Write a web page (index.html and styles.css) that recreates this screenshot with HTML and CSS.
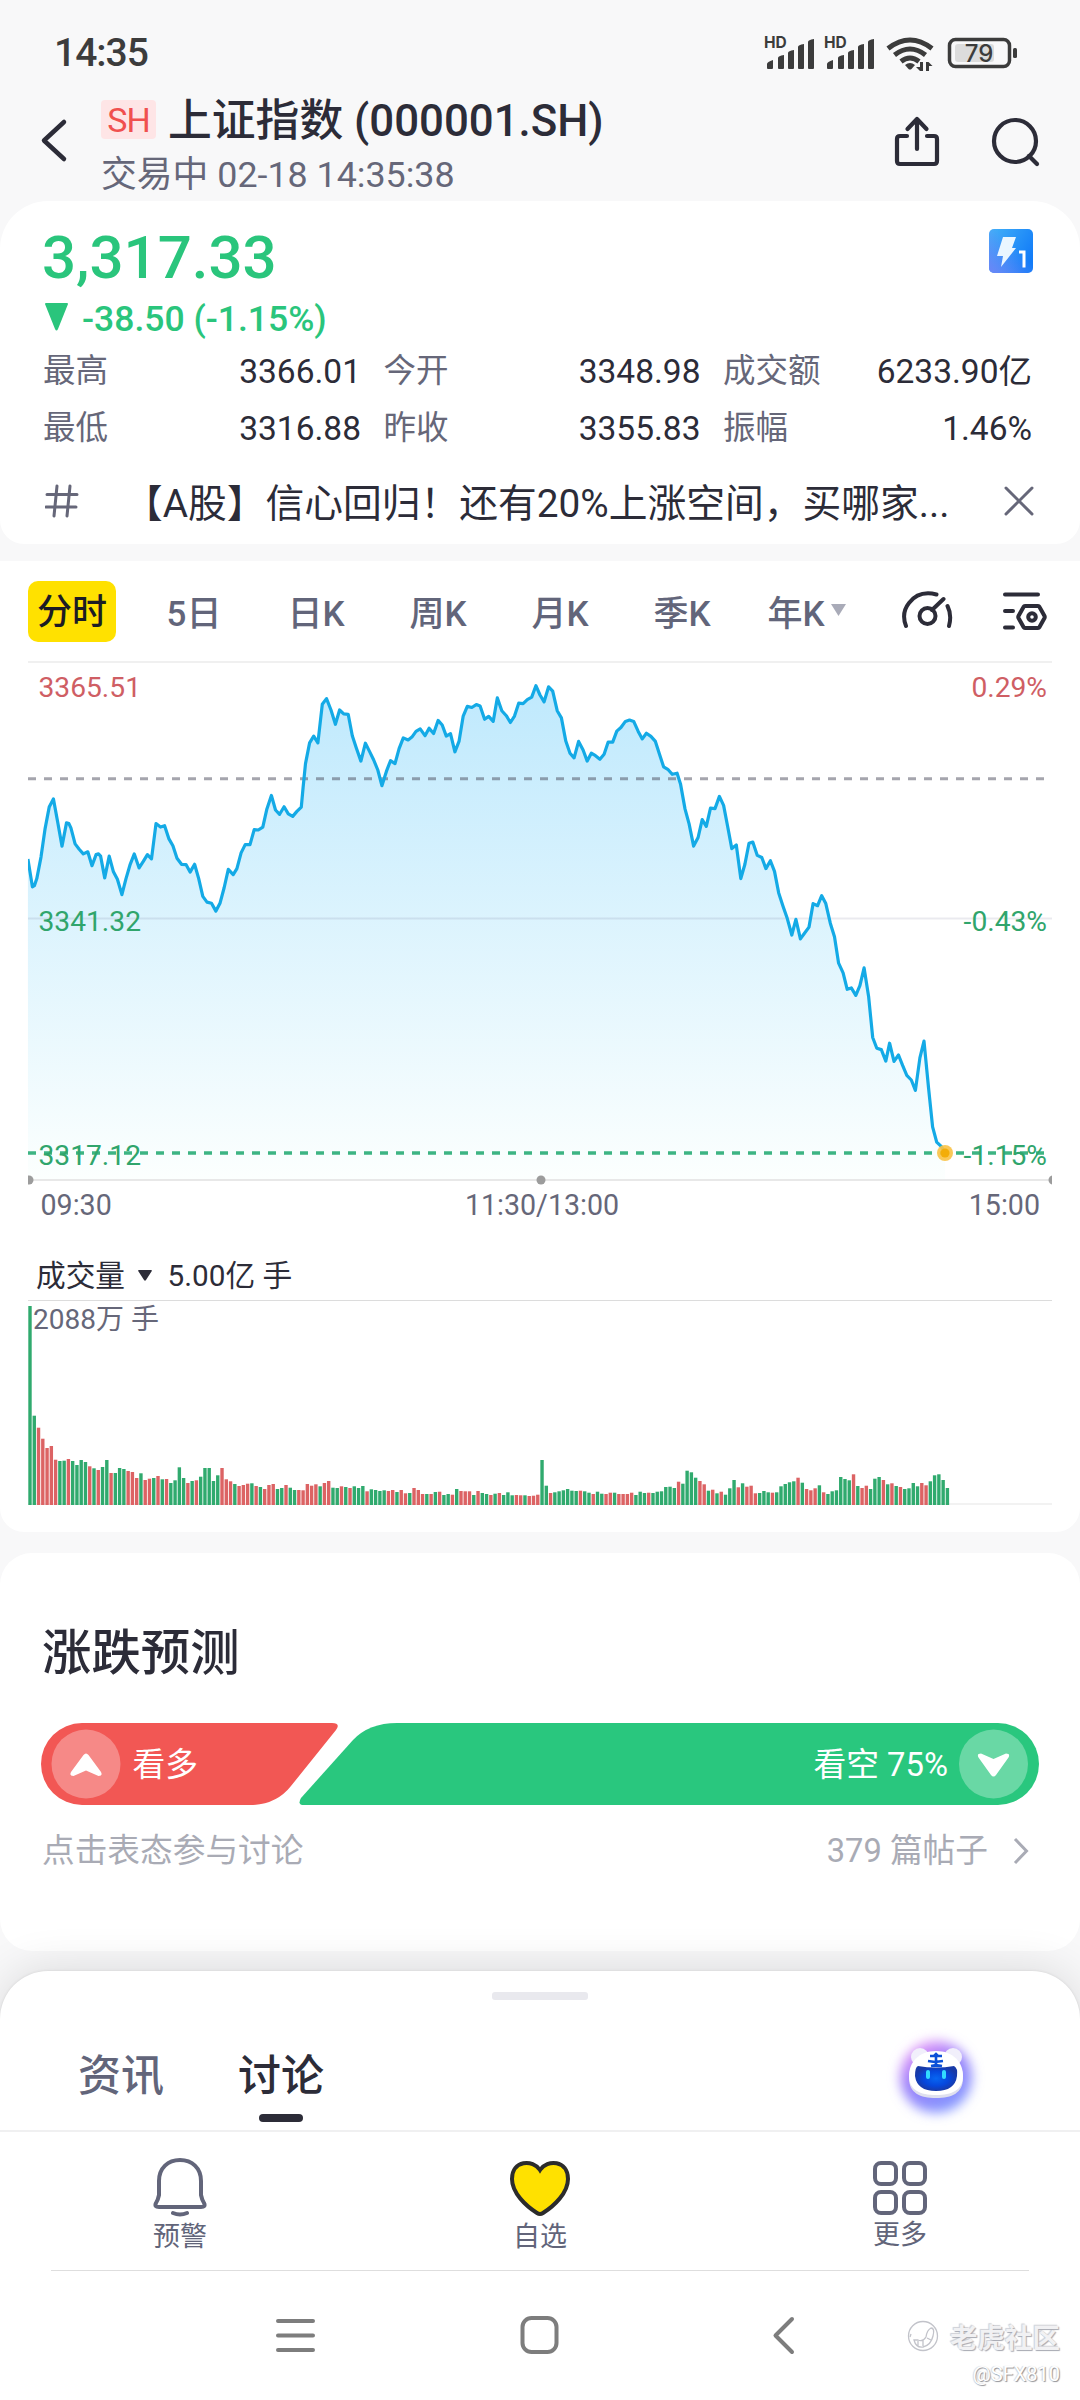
FILE: index.html
```html
<!DOCTYPE html>
<html lang="zh-CN">
<head>
<meta charset="utf-8">
<title>上证指数</title>
<link rel="stylesheet" href="styles.css">
</head>
<body>
<div class="status">
  <span class="clock">14:35</span>
  <svg class="status-icons" width="256" height="40" viewBox="0 0 256 40" fill="#3c3c3c">
    <g id="signal">
      <text x="0" y="17" class="hd">HD</text>
      <path d="M3 37v-4q0-2 6-4v8q0 1-1 1h-4q-1 0-1-1zM14 37v-10q0-2 6-3v13q0 1-1 1h-4q-1 0-1-1zM24 37v-15q0-2 6-3v18q0 1-1 1h-4q-1 0-1-1zM34 37v-21q0-2 6-3v24q0 1-1 1h-4q-1 0-1-1zM44 37v-26q0-2 6-3v29q0 1-1 1h-4q-1 0-1-1z"/>
    </g>
    <use href="#signal" x="60"/>
    <g fill="none" stroke="#3c3c3c" stroke-width="5">
      <path d="M124 17.500q22-17 44 0"/>
      <path d="M130.500 24q15.500-12 31 0"/>
      <path d="M137 30.500q9-7 18 0"/>
    </g>
    <path d="M141 34q5-4 10 0l-3.500 4q-1.500 1-3 0zM159 31v9h-3l-4-4h4v-5zM162 40v-9h2.500l4 4h-3.500v5z"/>
    <rect x="185.500" y="8.500" width="60" height="27" rx="6" fill="none" stroke="#3c3c3c" stroke-width="3.500"/>
    <rect x="191" y="13" width="39" height="18" rx="3" fill="#dcdcdc"/>
    <rect x="249" y="17" width="4" height="10" rx="1.500"/>
    <text x="215" y="31" text-anchor="middle" class="battery">79</text>
  </svg>
</div>

<header class="header">
  <svg class="back" width="30" height="46" viewBox="0 0 30 46"><path d="M25 4L5 22.500L25 41"/></svg>
  <div class="heading">
    <div class="title"><span class="market">SH</span><span>上证指数 (000001.SH)</span></div>
    <div class="subtitle">交易中 02-18 14:35:38</div>
  </div>
  <svg class="action" width="150" height="56" viewBox="0 0 150 56">
    <path d="M16 23h-7q-3 0-3 3v22q0 3 3 3h34q3 0 3-3v-22q0-3-3-3h-7M26 36V7M16.500 16L26 6L35.500 16"/>
    <circle cx="124" cy="28" r="21"/><path d="M138 43l8 8"/>
  </svg>
</header>

<section class="card quote">
  <div class="price-row">
    <span class="price">3,317.33</span>
    <svg class="level" width="44" height="44" viewBox="0 0 44 44">
      <defs>
        <linearGradient id="lv" x1="0" y1="0" x2="1" y2=".6"><stop offset="0" stop-color="#43b2f8"/><stop offset="1" stop-color="#127cf8"/></linearGradient>
        <linearGradient id="lv2" x1="0" y1="1" x2=".6" y2=".4"><stop offset="0" stop-color="#6d86f7"/><stop offset="1" stop-color="#6d86f7" stop-opacity="0"/></linearGradient>
      </defs>
      <rect width="44" height="44" rx="5" fill="url(#lv)"/><rect width="44" height="44" rx="5" fill="url(#lv2)"/>
      <path d="M14 8h13l-4 11h4L12 38l2-11H8z" fill="#eaf6ff"/>
      <path d="M30 23h5v15.500" fill="none" stroke="#fff" stroke-width="3"/>
    </svg>
  </div>
  <div class="change"><svg width="23" height="28" viewBox="0 0 23 28"><path d="M0 1q0-1 1-1h21q1 0 1 1L13 26q-1.500 3-3 0z" fill="#2ac57c"/></svg><span>-38.50 (-1.15%)</span></div>
  <dl class="stats">
    <div><dt>最高</dt><dd>3366.01</dd></div>
    <div><dt>今开</dt><dd>3348.98</dd></div>
    <div><dt>成交额</dt><dd>6233.90亿</dd></div>
    <div><dt>最低</dt><dd>3316.88</dd></div>
    <div><dt>昨收</dt><dd>3355.83</dd></div>
    <div><dt>振幅</dt><dd>1.46%</dd></div>
  </dl>
  <div class="news">
    <svg width="34" height="34" viewBox="0 0 34 34"><path d="M12 2L9 32M25 2L22 32M2 10.500h30M1 23h30"/></svg>
    <span class="news-text">【A股】信心回归！还有20%上涨空间，买哪家...</span>
    <svg width="30" height="30" viewBox="0 0 30 30"><path d="M2 2l26 26M28 2L2 28"/></svg>
  </div>
</section>

<section class="card chart">
  <nav class="periods">
    <span class="period"><b class="current">分时</b></span>
    <span class="period">5日</span>
    <span class="period">日K</span>
    <span class="period">周K</span>
    <span class="period">月K</span>
    <span class="period">季K</span>
    <span class="period year">年K<svg width="15" height="12" viewBox="0 0 15 12"><path d="M0 0h15L7.500 12z" fill="#a9abb8"/></svg></span>
    <svg class="tools" width="148" height="42" viewBox="0 0 148 42">
      <path d="M6 37Q1 24 9 14Q19 1 36.500 5.500M47.500 17Q52 26 49 37M32 21L43.500 10"/>
      <circle cx="27.500" cy="27" r="8"/>
      <path d="M105 5.500h33M105 22h8M105 38.500h8"/>
      <path d="M125 17h13q1 0 1.500 1l5 9q.5 1 0 2l-5 9q-.5 1-1.500 1h-13q-1 0-1.500-1l-5-9q-.5-1 0-2l5-9q.5-1 1.500-1z"/>
      <circle cx="132" cy="28" r="3.800"/>
    </svg>
  </nav>
  <svg class="trend" width="1080" height="590" viewBox="0 0 1080 590">
    <defs>
      <linearGradient id="fill" gradientUnits="userSpaceOnUse" x1="0" y1="35" x2="0" y2="530"><stop offset="0" stop-color="#bfe9fd"/><stop offset="1" stop-color="#fcfffe"/></linearGradient>
      <clipPath id="plot"><rect x="28" y="0" width="1024" height="590"/></clipPath>
    </defs>
    <path d="M28 12h1024" stroke="#f0f0f0" stroke-width="2"/>
    <path id="area" fill="url(#fill)"/>
    <path d="M28 268.500h1024" stroke="#606080" stroke-opacity=".13" stroke-width="2"/>
    <path d="M28 128.700h1018" stroke="#4b4b5b" stroke-opacity=".5" stroke-width="3" stroke-dasharray="8 8"/>
    <path id="line" fill="none" stroke="#14aae6" stroke-width="3.200" stroke-linejoin="round" clip-path="url(#plot)"/>
    <path d="M28 503h1018" stroke="#3db483" stroke-width="3.500" stroke-dasharray="8 8"/>
    <path d="M28 530h1024" stroke="#e8e8e8" stroke-width="2"/>
    <g fill="#9c9c9c" clip-path="url(#plot)"><circle cx="29" cy="530" r="4.500"/><circle cx="541" cy="530" r="4.500"/><circle cx="1053" cy="530" r="4.500"/></g>
    <circle cx="945" cy="503" r="8" fill="#f9c246" fill-opacity=".9"/><circle cx="945" cy="503" r="4.500" fill="#f3ad09"/>
    <g class="axis">
      <text x="38.500" y="47" class="up">3365.51</text>
      <text x="38.500" y="281" class="down">3341.32</text>
      <text x="38.500" y="515" class="down">3317.12</text>
      <g text-anchor="end">
        <text x="1047" y="47" class="up">0.29%</text>
        <text x="1047" y="281" class="down">-0.43%</text>
        <text x="1047" y="515" class="down">-1.15%</text>
      </g>
      <text x="40.500" y="564.500" class="time">09:30</text>
      <text x="542" y="564.500" text-anchor="middle" class="time">11:30/13:00</text>
      <text x="1040" y="564.500" text-anchor="end" class="time">15:00</text>
    </g>
  </svg>
  <div class="volume-head"><span>成交量</span><svg width="14" height="11" viewBox="0 0 14 11"><path d="M1 0h12q1.500 0 .5 1.500L8 10q-1 1.500-2 0L.5 1.500Q-.5 0 1 0z" fill="#2c2c38"/></svg><span>5.00亿 手</span></div>
  <svg class="volume" width="1080" height="206" viewBox="0 0 1080 206">
    <path d="M28 .5h1024" stroke="#dcdcdc"/>
    <path d="M28 204h1024" stroke="#f2f2f2" stroke-width="2"/>
    <g id="bars"></g>
    <text x="33" y="29" class="peak">2088万 手</text>
  </svg>
</section>

<section class="card vote">
  <h2>涨跌预测</h2>
  <div class="vote-bar">
    <svg width="998" height="82" viewBox="-1 0 998 82">
      <path d="M40 0H290Q299 0 294 7L249 63Q234 82 208 82H40A41 41 0 0 1 40 0z" fill="#f25754"/>
      <path d="M355 0H956A41 41 0 0 1 956 82H262Q255 82 259 75L311 17Q327 0 355 0z" fill="#29c77e"/>
      <g fill="#fff"><circle cx="44" cy="41" r="34.500" fill-opacity=".3"/><circle cx="951.500" cy="41" r="34.500" fill-opacity=".3"/>
      <path d="M41.500 32q2.500-3 5 0L59 49q2 4-2.500 4L44 47.500 31.500 53Q27 53 29 49zM949 52q2.500 3 5 0L966.500 34.500q2-4-2.500-4L951.500 36 939 30.500q-4.500 0-2.500 4z"/></g>
      <g class="vote-label"><text x="90.500" y="53">看多</text><text x="906" y="53" text-anchor="end">看空 75%</text></g>
    </svg>
  </div>
  <div class="vote-foot"><span>点击表态参与讨论</span><span class="posts">379 篇帖子<svg width="16" height="28" viewBox="0 0 16 28"><path d="M2 2L13.500 14L2 26"/></svg></span></div>
</section>

<section class="sheet">
  <i class="handle"></i>
  <div class="tabs">
    <span class="tab">资讯</span><span class="tab active">讨论</span>
    <svg class="bot" width="100" height="100" viewBox="0 0 100 100">
      <defs>
        <filter id="soft" x="-40%" y="-40%" width="180%" height="180%"><feGaussianBlur stdDeviation="6"/></filter>
        <linearGradient id="halo" x1=".1" y1="0" x2=".7" y2="1"><stop offset="0" stop-color="#f99af7"/><stop offset=".45" stop-color="#9b80fa"/><stop offset="1" stop-color="#8199ff"/></linearGradient>
        <radialGradient id="face"><stop offset="0" stop-color="#0766f2"/><stop offset=".6" stop-color="#0647dc"/><stop offset="1" stop-color="#183aa8"/></radialGradient>
      </defs>
      <circle cx="49" cy="50" r="36" fill="url(#halo)" filter="url(#soft)"/>
      <g fill="#f1effb"><circle cx="33" cy="30" r="9"/><circle cx="66" cy="30" r="9"/><path d="M49 25C66 25 76 36 76 51S65 71 49 71 22 66 22 51 32 25 49 25z" fill="#dfe0ee"/><path d="M49 24C66 24 76 35 76 49S65 68 49 68 22 63 22 49 32 24 49 24z" fill="#fff"/></g>
      <path d="M31 39Q49 42 67 39Q71 41 70 49Q68 64 49 64Q30 64 28 49Q28 40 31 39z" fill="url(#face)"/>
      <path d="M43 29h4l2-2 2 2h4M41 34l7 1 8-1M44 39l5-1 6 1M49 29v11" fill="none" stroke="#0b50d8" stroke-width="2.600"/>
      <g fill="#32dcff"><rect x="39" y="43" width="4" height="9" rx="2"/><rect x="55" y="43" width="4" height="9" rx="2"/></g>
    </svg>
  </div>
  <nav class="actions">
    <span><svg width="60" height="62" viewBox="0 0 60 62"><path d="M30 4C18 4 9 12 9 25v14Q8 44 6 47Q4 51 9 51h42q5 0 3-4q-2-3-3-8V25C51 12 42 4 30 4zM23 57q7 3 14 0"/></svg>预警</span>
    <span><svg width="64" height="62" viewBox="0 0 64 62"><path d="M32 14C25 3 4 4 4 23C4 37 18 50 29 57q3 2 6 0C46 50 60 37 60 23C60 4 39 3 32 14z" fill="#ffe100" stroke="#2c2c2c"/></svg>自选</span>
    <span class="more"><svg width="60" height="62" viewBox="0 0 60 62"><rect x="5" y="7" width="21" height="21" rx="6"/><rect x="34" y="7" width="21" height="21" rx="6"/><rect x="5" y="36" width="21" height="21" rx="6"/><rect x="34" y="36" width="21" height="21" rx="6"/></svg>更多</span>
  </nav>
  <div class="system">
    <svg class="keys" width="540" height="46" viewBox="0 0 540 46"><path d="M8 9h35M8 23.500h35M8 38h35"/><rect x="252.500" y="6" width="34" height="34" rx="9"/><path d="M522 7L505.500 23.500L522 40"/></svg>
    <div class="watermark">
      <div class="community"><svg width="32" height="32" viewBox="0 0 32 32"><circle cx="16" cy="16" r="14.500"/><path d="M3 17l1-3M7 20q2 8 9 7 8-2 10-11 2-8-2-8-4 2-5 9-3 5-8 3zM11 21v5M16 20v6M20 18l4 2"/></svg><span>老虎社区</span></div>
      <div class="author">@SFX810</div>
    </div>
  </div>
</section>
<script src="chart.js"></script>
</body>
</html>
```
FILE: styles.css
```css
* { box-sizing: border-box; margin: 0; padding: 0; }
body {
  width: 1080px; height: 2400px; overflow: hidden;
  display: flex; flex-direction: column;
  background: #f8f8f9; color: #2c2c38;
  font-family: "Roboto", "Noto Sans CJK SC", sans-serif;
}
svg { display: block; flex: none; }

.status { height: 90px; padding: 15px 58px 0 54px; display: flex; align-items: center; justify-content: space-between; }
.clock { font-size: 39px; font-weight: 500; letter-spacing: -1px; color: #3c3c3c; }
.status-icons { margin: -4px 2px 0 0; }
.hd { font: 700 15.500px "Inter", sans-serif; }
.battery { font: 500 24px "Inter", sans-serif; }

.header { height: 111px; padding: 4px 39px 0 39px; display: flex; }
.back { margin-top: 24px; fill: none; stroke: #2c2c38; stroke-width: 4.500; stroke-linecap: round; stroke-linejoin: round; }
.heading { margin-left: 32px; flex: 1; }
.title { height: 54px; display: flex; align-items: center; gap: 12px; font-size: 43.800px; font-weight: 500; line-height: 54px; white-space: nowrap; }
.market { width: 55px; height: 39px; margin-top: -4px; border-radius: 4px; background: #fee5e6; color: #f0504f; font-size: 34px; font-weight: 400; line-height: 40px; text-align: center; letter-spacing: -1px; }
.subtitle { font-size: 35.800px; line-height: 54px; color: #666779; }
.action { margin-top: 19px; fill: none; stroke: #2c2c38; stroke-width: 4.200; stroke-linecap: round; stroke-linejoin: round; }

.card { background: #fff; }
.quote { height: 343px; padding: 21.500px 48px 0 44px; border-radius: 48px 48px 24px 24px; }
.price-row { height: 70px; display: flex; justify-content: space-between; margin-right: -1px; }
.price { font-size: 60px; font-weight: 500; line-height: 70px; color: #2ac57c; margin-left: -2px; }
.level { margin-top: 6px; }
.change { height: 50px; display: flex; align-items: center; gap: 14px; padding-left: 1px; font-size: 35.500px; font-weight: 500; line-height: 52px; color: #2ac57c; }
.change svg { margin-top: -2px; }
.change span { margin-top: 2px; }
.stats { display: grid; grid-template-columns: 318px 317px 309px; column-gap: 22.500px; grid-auto-rows: 57px; font-size: 33.500px; line-height: 57px; margin: 0 -2px 0 -1px; }
.stats div { display: flex; justify-content: space-between; }
.stats dt { font-size: 32.500px; color: #666779; }
.news { height: 87px; padding-top: 2px; display: flex; align-items: center; margin-right: -2px; }
.news svg { fill: none; stroke: #666779; stroke-width: 3; stroke-linecap: round; }
.news svg:first-child { margin-left: 1px; }
.news-text { flex: 1; margin: -3px 0 0 45px; font-size: 38.750px; white-space: nowrap; }

.chart { height: 971px; margin-top: 17px; border-radius: 0 0 24px 24px; }
.periods { height: 89px; padding: 20px 31px 0 11px; display: flex; }
.period { width: 122px; height: 61px; padding-bottom: 3px; display: flex; align-items: center; justify-content: center; font-size: 35px; font-weight: 500; color: #62657a; }
.period:first-child { padding: 0; }
.year { gap: 6px; padding-left: 5px; }
.current { width: 88px; height: 61px; line-height: 63px; text-align: center; background: #ffe100; color: #1c1c24; border-radius: 10px; font-weight: 500; }
.tools { margin: 8px 0 0 35px; fill: none; stroke: #2c2c38; stroke-width: 4; stroke-linecap: round; }
.axis { font-size: 28.200px; }
.up { fill: #cf5e64; }
.down { fill: #30a56c; }
.time { font-size: 28.600px; fill: #666779; }
.volume-head { height: 60px; padding: 10px 0 0 36px; display: flex; align-items: center; font-size: 29.700px; line-height: 49px; color: #2c2c38; }
.volume-head svg { margin: 0 15.500px 0 13px; }
.peak { font-size: 28px; fill: #666779; }
.rise { fill: #dc6364; }
.fall { fill: #30aa6e; }

.vote { height: 398px; margin-top: 21px; padding: 65px 41px 0; border-radius: 32px; }
.vote h2 { padding-left: 1px; font-size: 49.400px; line-height: 70px; font-weight: 500; }
.vote-bar { margin-top: 35px; }
.vote-label { font-size: 32.800px; fill: #fff; }
.vote-foot { margin: 21px 1px 0; height: 50px; display: flex; justify-content: space-between; font-size: 32.700px; line-height: 50px; color: #a9abb5; }
.posts { display: flex; align-items: center; gap: 25px; padding-right: 9px; }
.posts svg { fill: none; stroke: #a9abb5; stroke-width: 3; }

.sheet { position: relative; margin-top: 20px; height: 429px; background: #fff; border-radius: 48px 48px 0 0; box-shadow: 0 -2px 46px rgba(0,0,0,.12), 0 0 3px rgba(0,0,0,.1); }
.handle { display: block; width: 96px; height: 8px; margin: 0 auto; position: relative; top: 21px; border-radius: 3px; background: #e9e9ee; }
.tabs { height: 153px; padding: 62px 93px 0 78px; display: flex; border-bottom: 2px solid #f0f0f1; }
.tab { height: 82px; margin-right: 74px; display: flex; flex-direction: column; align-items: center; font-size: 43px; line-height: 70px; font-weight: 500; color: #62657a; }
.active { color: #2c2c38; }
.active::after { content: ""; width: 44px; height: 8px; margin-top: 3px; border-radius: 4px; background: #2c2c38; }
.bot { margin: -14px 0 0 auto; overflow: visible; }
.actions { height: 138px; display: grid; grid-template-columns: repeat(3, 360px); }
.actions span { padding-top: 24px; display: flex; flex-direction: column; align-items: center; font-size: 27px; line-height: 34px; color: #62657a; }
.actions svg { margin-bottom: 2px; fill: none; stroke: #62657a; stroke-width: 4; stroke-linecap: round; }
.actions .more svg { margin-bottom: 0; }
.system { height: 130px; margin: 0 51px; padding: 41px 0 0 219px; display: flex; border-top: 1.500px solid #dedede; }
.keys { fill: none; stroke: #7d7d7d; stroke-width: 4; stroke-linecap: round; stroke-linejoin: round; }
.watermark { margin: 4px -31px 0 auto; flex: none; text-align: right; white-space: nowrap; }
.community { display: flex; align-items: center; gap: 11px; height: 40px; font-size: 27.500px; font-weight: 700; color: #f1f1f3; text-shadow: 1px 1px 1px #a6a8b1, -1px -1px 1px #cfd0d5; }
.community svg { fill: none; stroke: #c2c3ca; stroke-width: 1.300; }
.author { font-size: 20px; line-height: 36px; color: #fff; text-shadow: 1px 1px 1px #8f9095, -1px 0 1px #d5d6da; }
```
FILE: chart.js
```js
// Intraday price samples as x,y pairs on a fine grid.
const STEP_X = 0.34439, STEP_Y = 0.35714;
const price = `81,585 94,663 100,660 107,640 119,580 131,500 143,440 155,417 168,485 180,549 193,484 200,486 206,498 218,543 230,558 242,571 255,565 267,604 279,573 286,571 292,577 304,638 317,577 329,620 341,642 354,685 366,640 378,600 390,571 404,610 416,592 428,573 440,585 453,486 466,496 478,492 490,528 502,548 514,583 527,600 540,601 552,622 565,600 577,640 589,690 601,706 614,709 627,731 639,708 651,665 663,614 677,629 688,612 700,568 712,545 726,545 738,503 750,504 763,496 775,445 788,407 800,448 812,460 825,439 837,459 850,466 862,452 875,440 880,385 887,318 899,260 911,241 923,260 936,152 948,136 961,168 974,208 986,168 998,179 1011,180 1023,240 1035,275 1048,311 1061,261 1073,284 1085,308 1097,336 1109,380 1122,340 1134,310 1147,318 1159,276 1171,246 1185,252 1196,244 1208,228 1220,221 1234,240 1246,219 1259,234 1272,197 1284,210 1296,241 1308,234 1321,285 1333,255 1345,185 1357,158 1370,161 1383,153 1394,157 1407,194 1419,186 1432,200 1444,134 1457,170 1470,184 1482,203 1494,185 1506,149 1519,150 1531,139 1544,132 1556,100 1568,126
1580,145 1593,103 1605,115 1618,170 1630,190 1643,255 1655,289 1667,302 1680,256 1693,280 1705,311 1717,289 1729,296 1742,306 1754,292 1766,258 1779,258 1791,227 1803,217 1816,200 1828,196 1840,200 1853,228 1865,249 1877,233 1890,242 1903,256 1915,292 1927,327 1939,334 1952,348 1966,345 1976,375 1989,445 2001,487 2014,549 2027,525 2039,475 2051,494 2063,443 2076,444 2089,410 2101,435 2113,495 2125,556 2138,546 2151,640 2163,600 2175,541 2186,538 2199,575 2212,581 2224,612 2237,590 2249,620 2261,680 2274,718 2286,752 2299,798 2311,754 2324,809 2336,793 2349,776 2361,710 2374,716 2386,688 2398,710 2411,765 2423,803 2435,877 2448,904 2460,950 2472,946 2485,967 2497,940 2509,890 2522,970 2534,1085 2546,1115 2559,1119 2572,1151 2583,1101 2596,1152 2609,1134 2621,1163 2633,1191 2646,1204 2658,1233 2671,1142 2683,1095 2696,1225 2708,1335 2720,1378 2733,1390 2744,1408`
  .split(/\s+/).map(p => p.split(",").map(Number))
  .map(([x, y]) => (x * STEP_X).toFixed(1) + " " + (y * STEP_Y).toFixed(1));
document.getElementById("line").setAttribute("d", "M" + price.join("L"));
document.getElementById("area").setAttribute("d", "M28 530L" + price.join("L") + "V530z");

// Minute volumes: bar top in thirds of a pixel (795 = baseline), G for falling and R for rising.
const volume = `198G 527G 563R 596R 624R 618R 659R 663G 662G 657R 663G 675G 660G 666G 679R 685G 690R 681G 660G 699R 699G 684G 687G 693R 696R 714R 700G 720R 716R 714G 708R 718G 717R 729G 721G 682G 714G 729R 723G 721R 710G 684G 684G 723G 706G 684R 718R 724R 732G 738R 735R 731R 730G 738R 741G 747R 735R 732R 747G 744G 735R 743G 750G 750R 751R 732R 737R 733R 739G 729R 723R 743G 744G 739R 741G 744R 739G 744G 738G 754R 748G 750G 753G 751G 753R 750R 756G 750R 760R 759G 744R 750R 762R 762G 762R 756G 755R 765G 762G 764R 747G 753R 754R 754R 765G 753R 759G 762G 765R 761G 759R 765G 757G 766G 765R 766R 766G 768R 767R 764R
660G 737G 759R 757G 754G 751G 747G 752G 753G 752R 754G 758G 762R 755G 761G 762R 758R 758G 762R 762R 762R 758R 765G 755G 759G 758R 759G 755G 754G 741G 740G 744G 725R 731G 692G 697G 713G 723R 733R 752G 749R 760G 755R 764G 745G 720G 742R 730G 740R 737R 760R 759G 753G 757G 758R 757G 739G 732G 727G 724G 713R 728G 747R 751R 745R 736G 757R 762G 754G 751G 711G 717G 721G 703R 738G 744R 737R 747G 716G 711G 720R 733G 730R 738G 741R 747G 745G 729G 739G 729R 736R 724G 706G 703G 720G 744G`.split(/\s+/);
document.getElementById("bars").innerHTML = volume.map((v, i) => {
  const h = (795 - parseInt(v, 10)) / 3;
  return `<rect class="${v.endsWith("G") ? "fall" : "rise"}" x="${(28.3 + i * 4.267).toFixed(2)}" y="${(205 - h).toFixed(1)}" width="3.400" height="${h.toFixed(1)}"/>`;
}).join("");
```
